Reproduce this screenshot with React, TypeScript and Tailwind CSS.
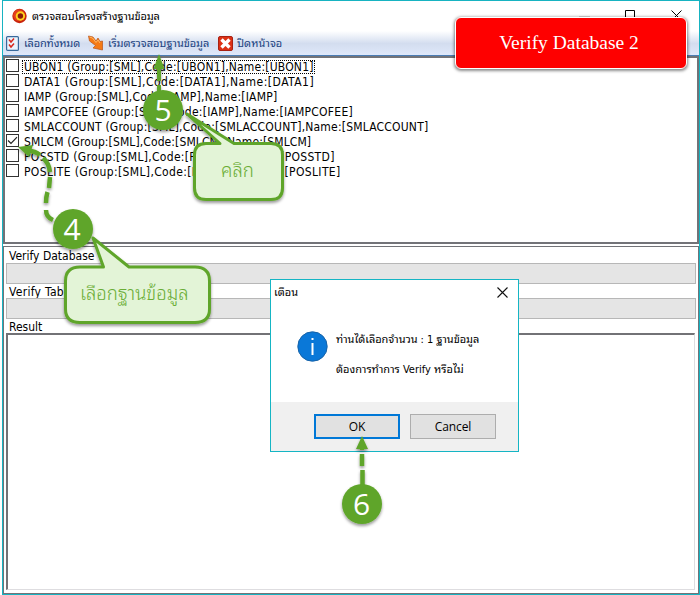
import type { ReactNode } from "react";

const rows = [
  { text: "UBON1 (Group:[SML],Code:[UBON1],Name:[UBON1]", fit: "tracking-[0.2px]", focus: true },
  { text: "DATA1 (Group:[SML],Code:[DATA1],Name:[DATA1]", fit: "tracking-[0.49px]" },
  { text: "IAMP (Group:[SML],Code:[IAMP],Name:[IAMP]", fit: "tracking-[0.22px]" },
  { text: "IAMPCOFEE (Group:[SML],Code:[IAMP],Name:[IAMPCOFEE]", fit: "tracking-[0.25px]" },
  { text: "SMLACCOUNT (Group:[SML],Code:[SMLACCOUNT],Name:[SMLACCOUNT]", fit: "tracking-[0.2px]" },
  { text: "SMLCM (Group:[SML],Code:[SMLCM],Name:[SMLCM]", fit: "tracking-[0.11px]", checked: true },
  { text: "POSSTD (Group:[SML],Code:[POSSTD],Name:[POSSTD]", fit: "tracking-[0.31px]" },
  { text: "POSLITE (Group:[SML],Code:[POSLITE],Name:[POSLITE]", fit: "tracking-[0.36px]" },
];

function TargetIcon() {
  return (
    <svg width="16" height="16" viewBox="0 0 16 16">
      <circle cx="7.5" cy="8" r="7.2" fill="#c9240c" />
      <circle cx="7" cy="7.3" r="5.8" fill="#e4401c" />
      <circle cx="8.4" cy="8" r="4.7" fill="#ffd21e" />
      <circle cx="8.4" cy="8" r="2.7" fill="#8b1c0c" />
    </svg>
  );
}

function ChecklistIcon() {
  return (
    <svg width="13" height="15" viewBox="0 0 13 15">
      <rect x=".6" y=".6" width="11.8" height="13.8" rx="1" fill="#eaf4fd" stroke="#38699c" strokeWidth="1.2" />
      <path d="M3 3.500l2 2.500L8 2.500M3 8.500l2 2.500 3-3.500" fill="none" stroke="#d8281c" strokeWidth="1.5" />
    </svg>
  );
}

function ArrowIcon() {
  return (
    <svg width="16" height="16" viewBox="0 0 16 16">
      <path d="M.5 1L5 2l3 4 2-3 2 3.500 2.500-.5V15L5 13l2.500-2.500L1.500 6z" fill="#f57a16" stroke="#b9541a" strokeWidth=".7" />
      <path d="M1.500 2l3 1 3.500 4.500L10 5l2 3" fill="none" stroke="#ffb763" />
    </svg>
  );
}

function StopIcon() {
  return (
    <svg width="15" height="15" viewBox="0 0 15 15">
      <rect x=".5" y=".5" width="14" height="14" rx="1.5" fill="#dc3014" stroke="#a82112" />
      <path d="M3.500 3.500l8 8M11.500 3.500l-8 8" stroke="#fff" strokeWidth="3.4" />
    </svg>
  );
}

function Check({ on }: { on?: boolean }) {
  return (
    <span className="flex h-[13px] w-[13px] shrink-0 items-center justify-center border border-[#333] bg-white">
      {on && (
        <svg width="11" height="11" viewBox="0 0 11 11">
          <path d="M1 5.5l3 3L10 2.2" fill="none" stroke="#222" strokeWidth="1.2" />
        </svg>
      )}
    </span>
  );
}

function Label({ children }: { children: ReactNode }) {
  return <div className="h-[15px] shrink-0 pl-[3px] text-[12px] leading-[17px] whitespace-nowrap">{children}</div>;
}

function Annotations() {
  return (
    <svg className="absolute inset-0" width="700" height="595" viewBox="0 0 700 595">
      <defs>
        <filter id="shade" x="-20%" y="-20%" width="140%" height="150%">
          <feDropShadow dx="0" dy="2" stdDeviation="1.5" floodColor="#000" floodOpacity=".4" />
        </filter>
      </defs>
      <g filter="url(#shade)" fill="#5fa52a">
        <path d="M159 54l5.500 15h-11z" />
        <path d="M159 68v13M159 85v14" stroke="#5fa52a" strokeWidth="4" />
        <circle cx="163" cy="110" r="20" />
        <path d="M18 147l15-2-4 12z" />
        <path
          d="M29 151Q35 151 40 155M43 158Q49 163 50 172M50 177L49 188M47.500 192Q46 197 46 203M46 210Q46 217 53 220"
          fill="none"
          stroke="#5fa52a"
          strokeWidth="4.500"
        />
        <circle cx="73" cy="229" r="20" />
        <path d="M362 436l6 13h-12z" />
        <path d="M362 447v3M362 454v12M362.500 470v15" stroke="#5fa52a" strokeWidth="4.500" />
        <circle cx="362" cy="504" r="20" />
      </g>
      <g filter="url(#shade)" fill="#e3f4d7" stroke="#5fa52a" strokeWidth="3" strokeLinejoin="round">
        <path d="M206 143.500H220L187 114 234 143.500H271Q282.500 143.500 282.500 155V188Q282.500 199.500 271 199.500H206Q194.500 199.500 194.500 188V155Q194.500 143.500 206 143.500z" />
        <path d="M80 267H103.500L93 238 129 267H195Q209.500 267 209.500 281V309Q209.500 322.500 195 322.500H80Q65.500 322.500 65.500 309V281Q65.500 267 80 267z" />
      </g>
      <g fill="#fff" textAnchor="middle" className="font-['Open_Sans','Noto_Sans',sans-serif] text-[30px]">
        <text x="163" y="121">5</text>
        <text x="72" y="239.500">4</text>
        <text x="361.500" y="514.500">6</text>
      </g>
    </svg>
  );
}

export default function App() {
  return (
    <div className="relative h-[595px] w-[700px] overflow-hidden bg-white pl-[2px] font-['DejaVu_Sans_Condensed','DejaVu_Sans','Noto_Sans_Thai_Looped','Loma','Garuda','Noto_Sans_Thai',sans-serif] text-black">
      <div className="flex h-[595px] w-[698px] flex-col border border-[#17b3c1]">
        <header className="flex h-[30px] shrink-0 items-center pl-[9px] text-[11px]">
          <TargetIcon />
          <span className="mt-[2px] ml-[4px] tracking-[-0.12px] whitespace-nowrap">ตรวจสอบโครงสร้างฐานข้อมูล</span>
          <div className="mb-[2px] ml-auto flex gap-[35px] pr-[17px]">
            <svg width="11" height="11"><path d="M0 6.500H11" stroke="#ddd" /></svg>
            <svg width="11" height="11"><path d="M.5 11V.5H9.500V11" fill="none" stroke="#000" /></svg>
            <svg width="11" height="11"><path d="M.5 .5l10 10M10.500 .5l-10 10" stroke="#000" /></svg>
          </div>
        </header>
        <nav className="flex h-[25px] shrink-0 items-center border-b border-[#4b7db5] bg-linear-to-b from-white via-[#d3ddef] via-52% to-[#dfe8fa] pl-[3px] text-[11px] text-[#20427f]">
          <ChecklistIcon />
          <span className="mt-[2px] ml-[5px] w-[54px] tracking-[-0.15px] whitespace-nowrap">เลือกทั้งหมด</span>
          <span className="ml-[10px]"><ArrowIcon /></span>
          <span className="mt-[2px] ml-[4px] w-[101px] tracking-[-0.06px] whitespace-nowrap">เริ่มตรวจสอบฐานข้อมูล</span>
          <span className="ml-[9px]"><StopIcon /></span>
          <span className="mt-[2px] ml-[4px] whitespace-nowrap">ปิดหน้าจอ</span>
        </nav>
        <ul className="h-[188px] shrink-0 border-2 border-[#727378] pt-[1px] text-[12px]">
          {rows.map((row) => (
            <li key={row.text} className="flex h-[15px] items-start pl-[1px]">
              <Check on={row.checked} />
              <span
                className={
                  row.focus
                    ? "mt-px ml-[3px] h-[14px] border border-dotted border-black pl-px leading-[12px] whitespace-nowrap"
                    : "ml-[5px] h-[15px] leading-[16px] whitespace-nowrap"
                }
              >
                <span className={row.fit}>{row.text}</span>
              </span>
            </li>
          ))}
        </ul>
        <section className="mt-[2px] flex min-h-0 flex-1 flex-col border border-[#727378] pt-[1px] pr-[2px] pb-[3px] pl-[2px]">
          <Label>Verify Database</Label>
          <div className="h-[21px] shrink-0 border border-[#b7b7b7] bg-[#e5e5e5]" />
          <div className="h-[14px] shrink-0 tracking-[0.3px]"><Label>Verify Table</Label></div>
          <div className="h-[21px] shrink-0 border border-[#b7b7b7] bg-[#e5e5e5]" />
          <div className="h-[14px] shrink-0"><Label>Result</Label></div>
          <div className="mr-px flex-1 border-t-2 border-r border-b border-l-2 border-t-[#727276] border-r-[#dedde0] border-b-[#dedde0] border-l-[#727276]" />
        </section>
      </div>

      <div className="absolute top-[279px] left-[270px] flex h-[173px] w-[249px] flex-col border border-[#15b5c4] bg-white text-[11px]">
        <div className="flex h-[25px] items-center justify-between pr-[10px] pl-[3px]">
          <span className="mt-px">เตือน</span>
          <svg width="11" height="11"><path d="M.5 .5l10 10M10.500 .5l-10 10" stroke="#111" strokeWidth="1.1" /></svg>
        </div>
        <div className="flex flex-1 pt-[25px] pl-[26px]">
          <svg className="mt-[1px] shrink-0" width="31" height="31" viewBox="0 0 31 31">
            <circle cx="15.500" cy="15.500" r="14.700" fill="#0a78d8" stroke="#1863a7" />
            <path d="M15.500 7v2M15.500 12v12" stroke="#fff" strokeWidth="2" />
          </svg>
          <div className="ml-[8px] pt-px whitespace-nowrap">
            <p className="h-[30px] leading-[18px] tracking-[-0.05px]">ท่านได้เลือกจำนวน : 1 ฐานข้อมูล</p>
            <p className="leading-[18px]">ต้องการทำการ Verify หรือไม่</p>
          </div>
        </div>
        <div className="flex h-[49px] gap-[10px] bg-[#f0f0f0] pt-[12px] pl-[43px] font-['Open_Sans','Noto_Sans',sans-serif] text-[12px]">
          <button className="h-[25px] w-[86px] border-2 border-[#0078d7] bg-[#e1e1e1] leading-[21px] tracking-[-0.2px]">OK</button>
          <button className="h-[25px] w-[86px] border border-[#adadad] bg-[#e1e1e1] leading-[23px] tracking-[-0.1px]">Cancel</button>
        </div>
      </div>

      <div className="absolute top-[17px] left-[455px] flex h-[52px] w-[232px] items-center justify-center rounded-[6px] border-[1.500px] border-white bg-[#fe0000] pr-[4px] font-['Liberation_Serif',serif] text-[19.500px] text-white shadow-[0_1px_3px_1px_rgba(0,0,0,0.45)]">
        Verify Database 2
      </div>

      <Annotations />
      <span className="absolute top-[157px] left-[221px] text-[18.500px] leading-[28px] font-light whitespace-nowrap text-[#6aad35]">คลิก</span>
      <span className="absolute top-[280px] left-[80px] text-[18.500px] leading-[28px] font-light whitespace-nowrap text-[#6aad35]">เลือกฐานข้อมูล</span>
    </div>
  );
}
